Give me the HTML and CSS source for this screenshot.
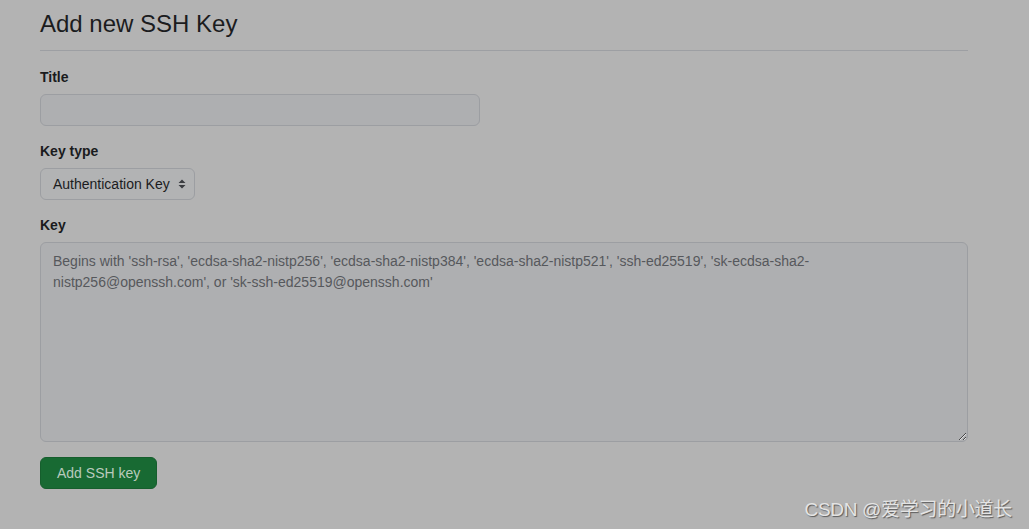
FILE: index.html
```html
<!DOCTYPE html>
<html lang="en">
<head>
<meta charset="utf-8">
<title>Add new SSH Key</title>
<link rel="stylesheet" href="styles.css">
</head>
<body>
<main class="page">
  <h1 class="heading">Add new SSH Key</h1>
  <form class="form">
    <div class="field">
      <label class="label" for="title">Title</label>
      <input class="input" id="title" type="text">
    </div>
    <div class="field">
      <label class="label" for="type">Key type</label>
      <div class="select">
        <span>Authentication Key</span>
        <svg class="arrows" width="8" height="12" viewBox="0 0 8 12"><path d="M4 1.5 L7.5 5 L0.5 5 Z M4 10.5 L7.5 7 L0.5 7 Z" fill="#3a3c40"/></svg>
      </div>
    </div>
    <div class="field">
      <label class="label" for="key">Key</label>
      <textarea class="textarea" id="key" placeholder="Begins with 'ssh-rsa', 'ecdsa-sha2-nistp256', 'ecdsa-sha2-nistp384', 'ecdsa-sha2-nistp521', 'ssh-ed25519', 'sk-ecdsa-sha2-nistp256@openssh.com', or 'sk-ssh-ed25519@openssh.com'"></textarea>
    </div>
    <div class="actions">
      <button class="btn" type="button">Add SSH key</button>
    </div>
  </form>
</main>
<div class="watermark">CSDN @爱学习的小道长</div>
</body>
</html>
```
FILE: styles.css
```css
html, body {
  margin: 0;
  padding: 0;
  background: #b3b3b3;
  height: 100%;
  overflow: hidden;
}
body {
  font-family: "Liberation Sans", Arial, sans-serif;
  color: #1b1c1e;
  position: relative;
}
.page {
  width: 928px;
  margin-left: 40px;
  padding-top: 8px;
}
.heading {
  font-size: 24px;
  font-weight: 400;
  line-height: 32px;
  margin: 0;
  padding-bottom: 10px;
  border-bottom: 1px solid #9d9fa3;
  color: #1b1c1e;
}
.form {
  display: flex;
  flex-direction: column;
  padding-top: 16px;
  gap: 15px;
}
.field {
  display: flex;
  flex-direction: column;
  align-items: flex-start;
}
.label {
  font-size: 14px;
  font-weight: 700;
  line-height: 20px;
  margin-bottom: 7px;
  color: #1a1b1d;
}
.input {
  box-sizing: border-box;
  width: 440px;
  height: 32px;
  border: 1px solid #9c9ea2;
  border-radius: 6px;
  background: #aeafb1;
  margin: 0;
  padding: 0 12px;
  font: inherit;
}
.select {
  box-sizing: border-box;
  height: 32px;
  width: 155px;
  border: 1px solid #9c9ea2;
  border-radius: 6px;
  background: #b2b3b4;
  display: flex;
  align-items: center;
  padding: 0 8px 0 12px;
  gap: 8px;
  font-size: 14px;
  color: #1b1c1e;
}
.arrows {
  margin-left: auto;
}
.textarea {
  box-sizing: border-box;
  width: 928px;
  height: 200px;
  border: 1px solid #9c9ea2;
  border-radius: 6px;
  background: #aeafb1;
  margin: 0;
  padding: 8px 12px;
  font-family: "Liberation Sans", Arial, sans-serif;
  font-size: 14px;
  line-height: 21px;
  resize: both;
  display: block;
}
.textarea::placeholder {
  color: #56585c;
  opacity: 1;
}
.actions {
  display: flex;
}
.btn {
  box-sizing: border-box;
  height: 32px;
  padding: 0 16px;
  border: 1px solid #165e2d;
  border-radius: 6px;
  background: #186a33;
  color: #b9cabd;
  font-family: "Liberation Sans", Arial, sans-serif;
  font-size: 14px;
  font-weight: 500;
}
.watermark {
  position: absolute;
  right: 17px;
  bottom: 7px;
  font-family: "Liberation Sans", "Noto Sans CJK SC", sans-serif;
  font-size: 19px;
  line-height: 24px;
  color: #e4e4e4;
  text-shadow: 1px 1px 1px #5a5a5a;
  letter-spacing: -0.3px;
}
```
